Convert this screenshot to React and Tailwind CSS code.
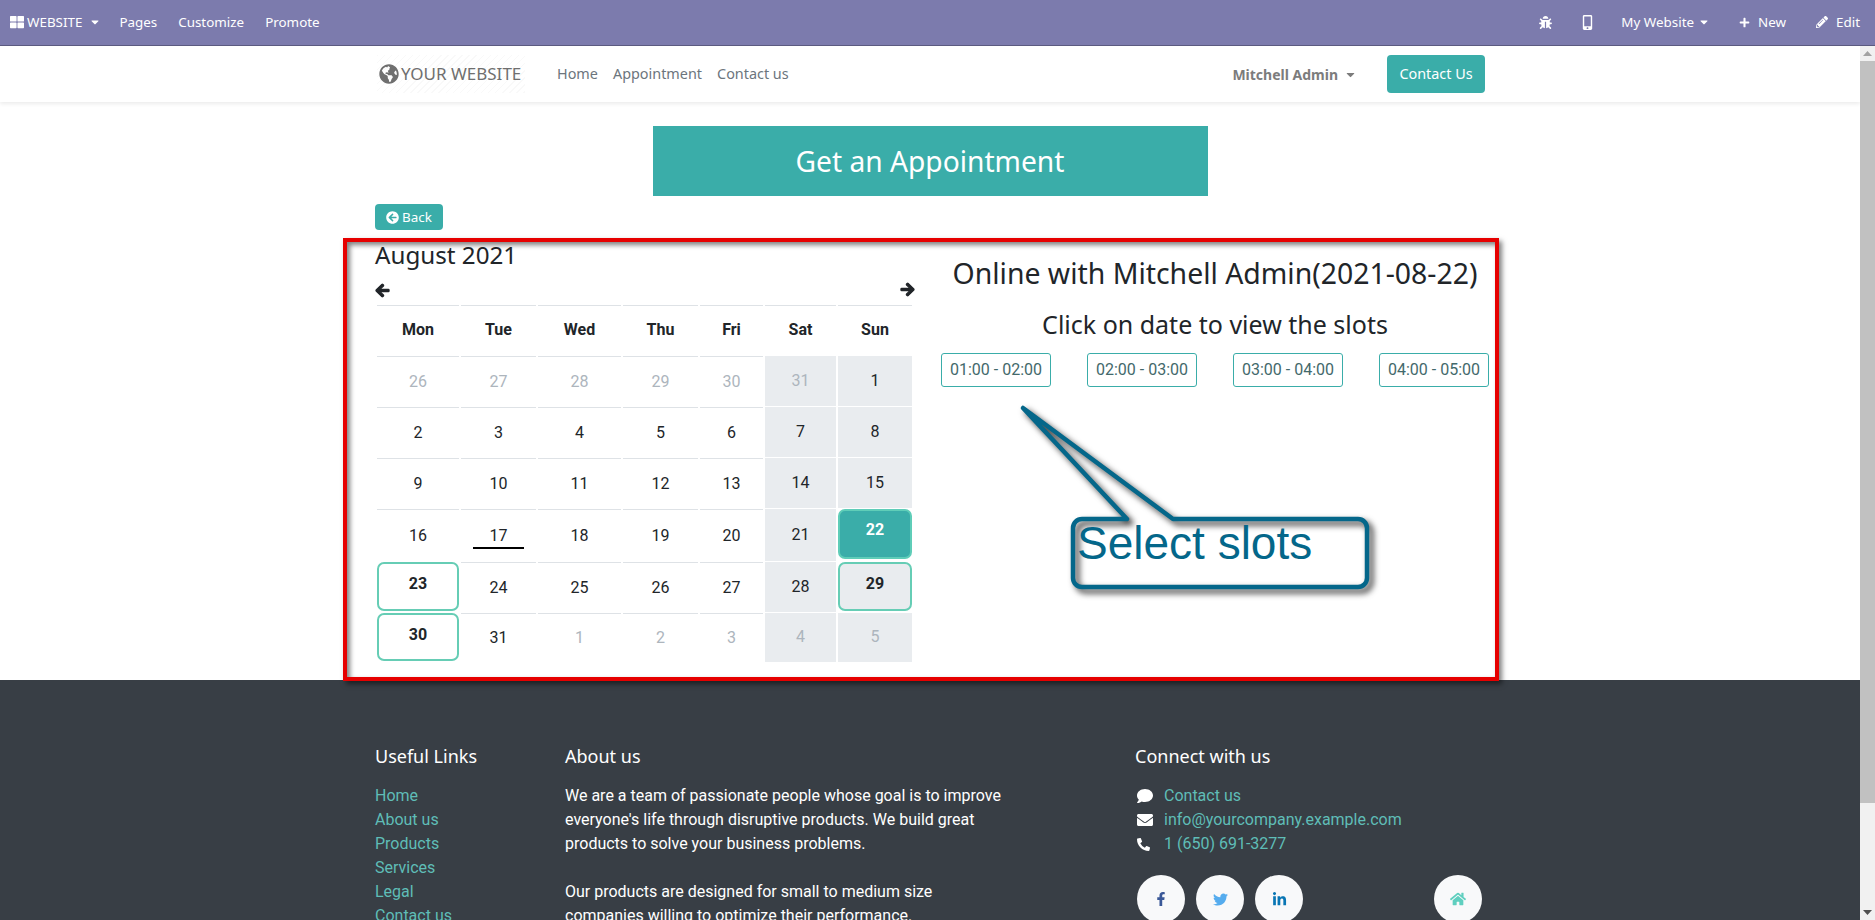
import React from 'react'
import {
  FaArrowCircleLeft, FaArrowLeft, FaArrowRight, FaBug, FaCaretDown, FaComment, FaEnvelope,
  FaFacebookF, FaGlobeAmericas, FaHome, FaLinkedinIn, FaMobileAlt, FaPencilAlt, FaPhoneAlt,
  FaPlus, FaThLarge, FaTwitter,
} from 'react-icons/fa'

const headFont = "font-['Noto_Sans',sans-serif]"

const colWidths = 'grid grid-cols-[84px_77px_85px_77px_65px_73px_76px]'
const dayNames = ['Mon', 'Tue', 'Wed', 'Thu', 'Fri', 'Sat', 'Sun']

// m = other month, t = today, a = available, s = selected
const weeks = [
  { h: 'h-[51px]', days: [['26', 'm'], ['27', 'm'], ['28', 'm'], ['29', 'm'], ['30', 'm'], ['31', 'm'], ['1']] },
  { h: 'h-[51px]', days: [['2'], ['3'], ['4'], ['5'], ['6'], ['7'], ['8']] },
  { h: 'h-[51px]', days: [['9'], ['10'], ['11'], ['12'], ['13'], ['14'], ['15']] },
  { h: 'h-[53px]', days: [['16'], ['17', 't'], ['18'], ['19'], ['20'], ['21'], ['22', 's']] },
  { h: 'h-[51px]', days: [['23', 'a'], ['24'], ['25'], ['26'], ['27'], ['28'], ['29', 'a']] },
  { h: 'h-[50px]', days: [['30', 'a'], ['31'], ['1', 'm'], ['2', 'm'], ['3', 'm'], ['4', 'm'], ['5', 'm']] },
]

function DayCell({ label, kind, weekend }) {
  const bg = weekend ? 'bg-[#e9ecef]' : 'bg-white'
  if (kind === 's') {
    return (
      <div className={`mx-[1px] flex items-start justify-center rounded-[7px] border-2 border-[#5fcdb8] bg-[#3aada9] pt-[7px] font-bold text-white ${weekend ? 'mb-[3px]' : ''}`}>
        {label}
      </div>
    )
  }
  if (kind === 'a') {
    return (
      <div className={`mx-[1px] mb-[2px] flex items-start justify-center rounded-[7px] border-2 border-[#66cdb5] pt-[8px] font-bold text-[#212529] ${bg}`}>
        {label}
      </div>
    )
  }
  return (
    <div className={`relative mx-[1px] flex items-center justify-center pb-[1px] ${bg} ${weekend ? 'mb-[1px]' : 'border-t border-[#dee2e6]'} ${kind === 'm' ? 'text-[#adb5bd]' : 'text-[#212529]'}`}>
      {label}
      {kind === 't' && <span className="absolute bottom-[13px] left-[12px] h-[2px] w-[51px] bg-black" />}
    </div>
  )
}

function Calendar() {
  return (
    <div className="w-[566px] shrink-0 pt-[10px] text-base">
      <h4 className={`${headFont} text-[24.2px] leading-[30px] text-[#212529]`}>August 2021</h4>
      <div className="mt-[12px] flex h-[23px] w-[540px] items-start justify-between text-[15px] text-[#212529]">
        <FaArrowLeft className="mt-[1px] [stroke-width:40]" />
        <FaArrowRight className="[stroke-width:40]" />
      </div>
      <div className={`${colWidths} ml-[1px] h-[51px] text-center font-bold text-[#212529]`}>
        {dayNames.map((d) => (
          <div key={d} className="mx-[1px] flex items-center justify-center border-t border-[#dee2e6] pb-[2px]">{d}</div>
        ))}
      </div>
      {weeks.map((w, i) => (
        <div key={i} className={`${colWidths} ml-[1px] ${w.h} text-center`}>
          {w.days.map(([label, kind], j) => (
            <DayCell key={j} label={label} kind={kind} weekend={j > 4} />
          ))}
        </div>
      ))}
    </div>
  )
}

function Slots() {
  return (
    <div className="w-[548px] shrink-0 pt-[27px] text-center">
      <h4 className={`${headFont} text-[28.4px] leading-[32px] text-[#212529]`}>Online with Mitchell Admin(2021-08-22)</h4>
      <h5 className={`${headFont} mt-[19px] text-[25px] leading-[32px] text-[#212529]`}>Click on date to view the slots</h5>
      <div className="mt-[13px] flex justify-between">
        {['01:00 - 02:00', '02:00 - 03:00', '03:00 - 04:00', '04:00 - 05:00'].map((s) => (
          <div key={s} className="flex h-[34px] w-[110px] items-center justify-center rounded-[3px] border border-[#3aada9] text-base text-[#43696b]">{s}</div>
        ))}
      </div>
    </div>
  )
}

function Footer() {
  return (
    <footer className="h-[240px] bg-[#383e45] text-base text-white">
      <div className="mx-auto flex w-[1140px] px-[15px] pt-[61px]">
        <div className="w-[190px]">
          <h5 className={`${headFont} text-[18px] leading-[30px]`}>Useful Links</h5>
          <ul className="mt-[13px] text-[#5fbdb7]">
            {['Home', 'About us', 'Products', 'Services', 'Legal', 'Contact us'].map((l) => (
              <li key={l} className="leading-[24px]">{l}</li>
            ))}
          </ul>
        </div>
        <div className="w-[570px]">
          <h5 className={`${headFont} text-[18px] leading-[30px]`}>About us</h5>
          <p className="mt-[13px] w-[440px] leading-[24px]">
            We are a team of passionate people whose goal is to improve everyone's life through disruptive products. We build great products to solve your business problems.
          </p>
          <p className="mt-[24px] w-[440px] leading-[24px]">
            Our products are designed for small to medium size companies willing to optimize their performance.
          </p>
        </div>
        <div className="flex-1">
          <h5 className={`${headFont} text-[18px] leading-[30px]`}>Connect with us</h5>
          <ul className="mt-[13px]">
            <li className="flex h-[24px] items-center"><FaComment className="ml-[2px] w-[27px] pr-[11px] text-[16px]" /><span className="text-[#5fbdb7]">Contact us</span></li>
            <li className="flex h-[24px] items-center"><FaEnvelope className="ml-[2px] w-[27px] pr-[11px] text-[16px]" /><span className="text-[#5fbdb7]">info@yourcompany.example.com</span></li>
            <li className="flex h-[24px] items-center"><FaPhoneAlt className="ml-[2px] w-[27px] pr-[14px] text-[13px]" /><span className="text-[#5fbdb7]">1 (650) 691-3277</span></li>
          </ul>
          <div className="mt-[19px] flex w-[346px] pl-[2px]">
            <a className="mr-[11px] flex h-[48px] w-[48px] items-center justify-center rounded-full bg-[#f8f9fa] text-[#3b5998]"><FaFacebookF className="text-[14px]" /></a>
            <a className="mr-[11px] flex h-[48px] w-[48px] items-center justify-center rounded-full bg-[#f8f9fa] text-[#55acee]"><FaTwitter className="text-[15px]" /></a>
            <a className="flex h-[48px] w-[48px] items-center justify-center rounded-full bg-[#f8f9fa] text-[#0976b4]"><FaLinkedinIn className="text-[15px]" /></a>
            <a className="ml-auto mr-[-1px] flex h-[48px] w-[48px] items-center justify-center rounded-full bg-[#f8f9fa] text-[#5fcfbf]"><FaHome className="text-[16px]" /></a>
          </div>
        </div>
      </div>
    </footer>
  )
}

function Scrollbar() {
  return (
    <div className="flex w-[15px] shrink-0 flex-col bg-[#f1f1f1]">
      <div className="flex h-[15px] items-center justify-center">
        <svg width="9" height="5" viewBox="0 0 9 5"><path d="M4.5 0 9 5H0z" fill="#a3a3a3" /></svg>
      </div>
      <div className="h-[742px] w-[15px] bg-[#c1c1c1]" />
      <div className="mt-auto flex h-[15px] items-center justify-center">
        <svg width="9" height="5" viewBox="0 0 9 5"><path d="M0 0h9L4.5 5z" fill="#505050" /></svg>
      </div>
    </div>
  )
}

export default function App() {
  return (
    <div className="flex h-screen flex-col overflow-hidden bg-white font-['Roboto',sans-serif]">
      <header className={`${headFont} flex h-[46px] shrink-0 items-center justify-between border-b border-[#5b5a80] bg-[#7c7bad] text-[13.4px] text-white`}>
        <div className="flex items-center">
          <FaThLarge className="ml-[10px] text-[14px]" />
          <span className="ml-[3px]">WEBSITE</span>
          <FaCaretDown className="ml-[7px] text-[12px]" />
          <span className="ml-[18px]">Pages</span>
          <span className="ml-[21px]">Customize</span>
          <span className="ml-[21px]">Promote</span>
        </div>
        <div className="flex items-center pr-[15px]">
          <FaBug className="text-[13px]" />
          <FaMobileAlt className="ml-[28px] text-[15px]" />
          <span className="ml-[26px]">My Website</span>
          <FaCaretDown className="ml-[4px] text-[12px]" />
          <FaPlus className="ml-[29px] text-[11px]" />
          <span className="ml-[8px]">New</span>
          <FaPencilAlt className="ml-[30px] text-[12px]" />
          <span className="ml-[8px]">Edit</span>
        </div>
      </header>

      <div className="flex min-h-0 flex-1">
        <div className="relative min-w-0 flex-1 overflow-hidden">
          <nav className="h-[56px] bg-white shadow-[0_2px_4px_rgba(0,0,0,0.08)]">
            <div className={`${headFont} mx-auto flex h-full w-[1140px] items-center px-[15px] text-[14.4px] text-[#6c757d]`}>
              <div className="ml-[2px] flex h-[38px] w-[148px] items-center bg-[repeating-linear-gradient(135deg,#f9f9f9_0,#f9f9f9_1px,#ffffff_1px,#ffffff_5px)] text-[#6f6f6f]">
                <FaGlobeAmericas className="ml-[2px] text-[20px]" />
                <span className="ml-[2px] text-[17px]">YOUR WEBSITE</span>
              </div>
              <span className="ml-[32px]">Home</span>
              <span className="ml-[15px]">Appointment</span>
              <span className="ml-[15px]">Contact us</span>
              <span className="ml-auto text-[14px] font-bold text-[#7c7c7c]">Mitchell Admin</span>
              <FaCaretDown className="ml-[6px] text-[13px] text-[#7c7c7c]" />
              <a className="ml-[30px] flex h-[38px] w-[98px] items-center justify-center rounded-[4px] bg-[#3aada9] text-white">Contact Us</a>
            </div>
          </nav>

          <main className="h-[578px]">
            <div className="mx-auto w-[1140px] px-[15px] pt-[24px]">
              <div className={`${headFont} mx-auto flex h-[70px] w-[555px] items-center justify-center bg-[#3aada9] text-[28.2px] text-white`}>
                Get an Appointment
              </div>
              <a className={`${headFont} mt-[8px] flex h-[26px] w-[68px] items-center justify-center rounded-[4px] bg-[#3aada9] text-[13.4px] text-white`}>
                <FaArrowCircleLeft className="mr-[3px] text-[13px]" />Back
              </a>
              <div className="flex">
                <Calendar />
                <Slots />
              </div>
            </div>
          </main>

          <Footer />

          {/* annotation drawn over the page */}
          <div className="pointer-events-none absolute left-[343px] top-[192px] h-[443px] w-[1156px] border-4 border-[#e60000] shadow-[3px_3px_5px_rgba(0,0,0,0.5),inset_3px_3px_5px_rgba(0,0,0,0.5)]" />
          <svg className="pointer-events-none absolute left-[1015px] top-[355px] drop-shadow-[4px_4px_3px_rgba(0,0,0,0.8)]" width="370" height="250" viewBox="0 0 370 250" fill="none">
            <path d="M8 7 112 118H67a9 9 0 0 0-9 9v50a9 9 0 0 0 9 9h276a9 9 0 0 0 9-9v-50a9 9 0 0 0-9-9H158z" stroke="#04678a" strokeWidth="4.5" strokeLinejoin="round" />
          </svg>
          <span className="pointer-events-none absolute left-[1077px] top-[471px] font-['Liberation_Sans',sans-serif] text-[46px] leading-[52px] text-[#04678a]">Select slots</span>
        </div>
        <Scrollbar />
      </div>
    </div>
  )
}
